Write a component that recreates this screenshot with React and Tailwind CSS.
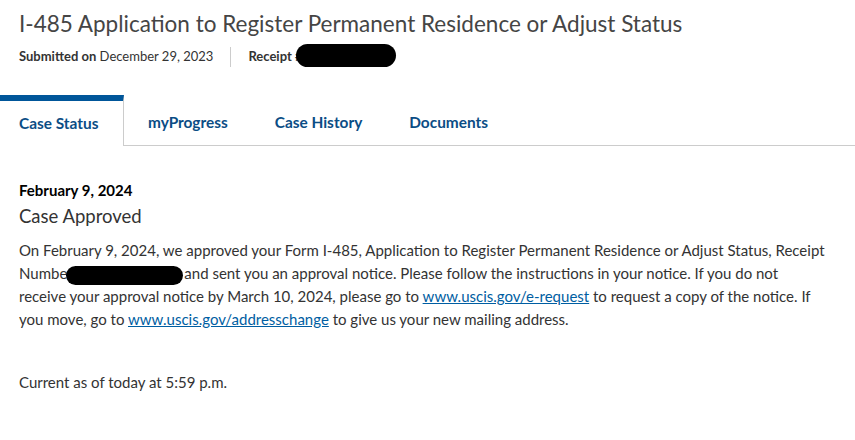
import React from 'react'

function Redacted({ className }) {
  return <span className={`inline-block bg-black rounded-full align-middle ${className}`} />
}

export default function App() {
  const tabs = ['myProgress', 'Case History', 'Documents']
  return (
    <div className="w-[855px] h-[440px] bg-white text-[#333] overflow-hidden font-['Lato',sans-serif]">
      {/* Header */}
      <div className="px-[19px] pt-[8px]">
        <h1 className="text-[22.5px] leading-[32px] text-[#454545]">
          I-485 Application to Register Permanent Residence or Adjust Status
        </h1>
        <div className="flex items-center mt-[6px] text-[13px] text-[#333]">
          <span>
            <b>Submitted on</b> December 29, 2023
          </span>
          <span className="w-px h-[20px] bg-[#ccc] mx-[17px]" />
          <span className="flex items-center">
            <b>Receipt #</b>
            <Redacted className="w-[100px] h-[23px] -ml-[6px] -mt-[2px]" />
          </span>
        </div>
      </div>

      {/* Tabs */}
      <div className="flex mt-[28px] h-[51px]">
        <div className="w-[124px] border-t-[6px] border-[#00569a] border-r border-r-[#ccc] flex items-center pl-[19px] text-[15.4px] font-bold text-[#0b4d85]">
          Case Status
        </div>
        <div className="flex-1 flex items-center border-b border-[#ccc] pt-[6px] text-[15.4px] font-bold text-[#0b4d85]">
          {tabs.map((t) => (
            <span key={t} className="ml-[24px] mr-[23px]">
              {t}
            </span>
          ))}
        </div>
      </div>

      {/* Body */}
      <div className="px-[19px] pt-[34px]">
        <div className="text-[15px] font-bold text-black leading-[20px]">February 9, 2024</div>
        <div className="text-[18.5px] leading-[26px] text-[#333] mt-[3px]">Case Approved</div>
        <p className="text-[15px] leading-[23px] mt-[10px] w-[830px]">
          On February 9, 2024, we approved your Form I-485, Application to Register Permanent Residence or Adjust Status, Receipt
          <br />
          Numbe
          <Redacted className="w-[117px] h-[19px] -ml-[1px] mr-[1px]" />and sent you an approval notice. Please follow the instructions in your notice. If you do not
          <br />
          receive your approval notice by March 10, 2024, please go to{' '}
          <a className="text-[#005ea2] underline" href="#">www.uscis.gov/e-request</a> to request a copy of the notice. If
          <br />
          you move, go to{' '}
          <a className="text-[#005ea2] underline" href="#">www.uscis.gov/addresschange</a> to give us your new mailing address.
        </p>
        <p className="text-[15px] leading-[23px] mt-[40px]">Current as of today at 5:59 p.m.</p>
      </div>
    </div>
  )
}
